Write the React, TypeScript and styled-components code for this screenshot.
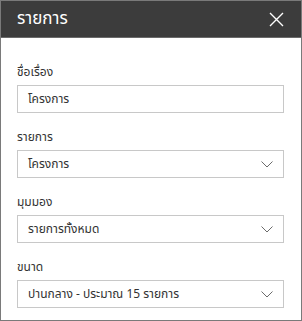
import React from "react";
import styled, { createGlobalStyle } from "styled-components";

const Global = createGlobalStyle`
  html, body { margin: 0; padding: 0; background: #ffffff; }
  body { font-family: "Noto Sans Thai", "Noto Sans Thai UI", "Segoe UI", "Noto Sans", sans-serif; }
  * { box-sizing: border-box; }
`;

const Panel = styled.div`
  width: 302px;
  height: 321px;
  border: 1px solid #7a7a7a;
  background: #ffffff;
  display: flex;
  flex-direction: column;
`;

const Header = styled.div`
  height: 37px;
  flex: 0 0 37px;
  background: #3c3c3c;
  border-bottom: 1px solid #6a6a6a;
  display: flex;
  align-items: center;
  justify-content: space-between;
  padding: 0 17px 0 16px;
`;

const Title = styled.h1`
  margin: 0;
  font-size: 17px;
  font-weight: 400;
  color: #ffffff;
  line-height: 20px;
`;

const CloseButton = styled.button`
  width: 16px;
  height: 16px;
  padding: 0;
  border: none;
  background: transparent;
  display: flex;
  align-items: center;
  justify-content: center;
  cursor: pointer;
`;

const Content = styled.div`
  display: flex;
  flex-direction: column;
  gap: 16px;
  padding: 26px 17px 0 16px;
`;

const Field = styled.div`
  display: flex;
  flex-direction: column;
  gap: 5px;
`;

const Label = styled.label`
  font-size: 12px;
  line-height: 16px;
  color: #333333;
`;

const Box = styled.div`
  height: 28px;
  border: 1px solid #c8c8c8;
  display: flex;
  align-items: center;
  justify-content: space-between;
  padding: 0 10px 0 10px;
  font-size: 12px;
  color: #333333;
`;

const Chevron = () => (
  <svg width="12" height="7" viewBox="0 0 12 7" fill="none">
    <path d="M0.5 0.5 L6 6 L11.5 0.5" stroke="#6b6b6b" strokeWidth="1" />
  </svg>
);

const fields: { label: string; value: string; dropdown: boolean }[] = [
  { label: "ชื่อเรื่อง", value: "โครงการ", dropdown: false },
  { label: "รายการ", value: "โครงการ", dropdown: true },
  { label: "มุมมอง", value: "รายการทั้งหมด", dropdown: true },
  { label: "ขนาด", value: "ปานกลาง - ประมาณ 15 รายการ", dropdown: true },
];

export default function App() {
  return (
    <>
      <Global />
      <Panel>
        <Header>
          <Title>รายการ</Title>
          <CloseButton aria-label="ปิด">
            <svg width="15" height="15" viewBox="0 0 15 15">
              <path d="M1 1 L14 14 M14 1 L1 14" stroke="#ffffff" strokeWidth="1.4" />
            </svg>
          </CloseButton>
        </Header>
        <Content>
          {fields.map((f) => (
            <Field key={f.label}>
              <Label>{f.label}</Label>
              <Box>
                <span>{f.value}</span>
                {f.dropdown && <Chevron />}
              </Box>
            </Field>
          ))}
        </Content>
      </Panel>
    </>
  );
}
